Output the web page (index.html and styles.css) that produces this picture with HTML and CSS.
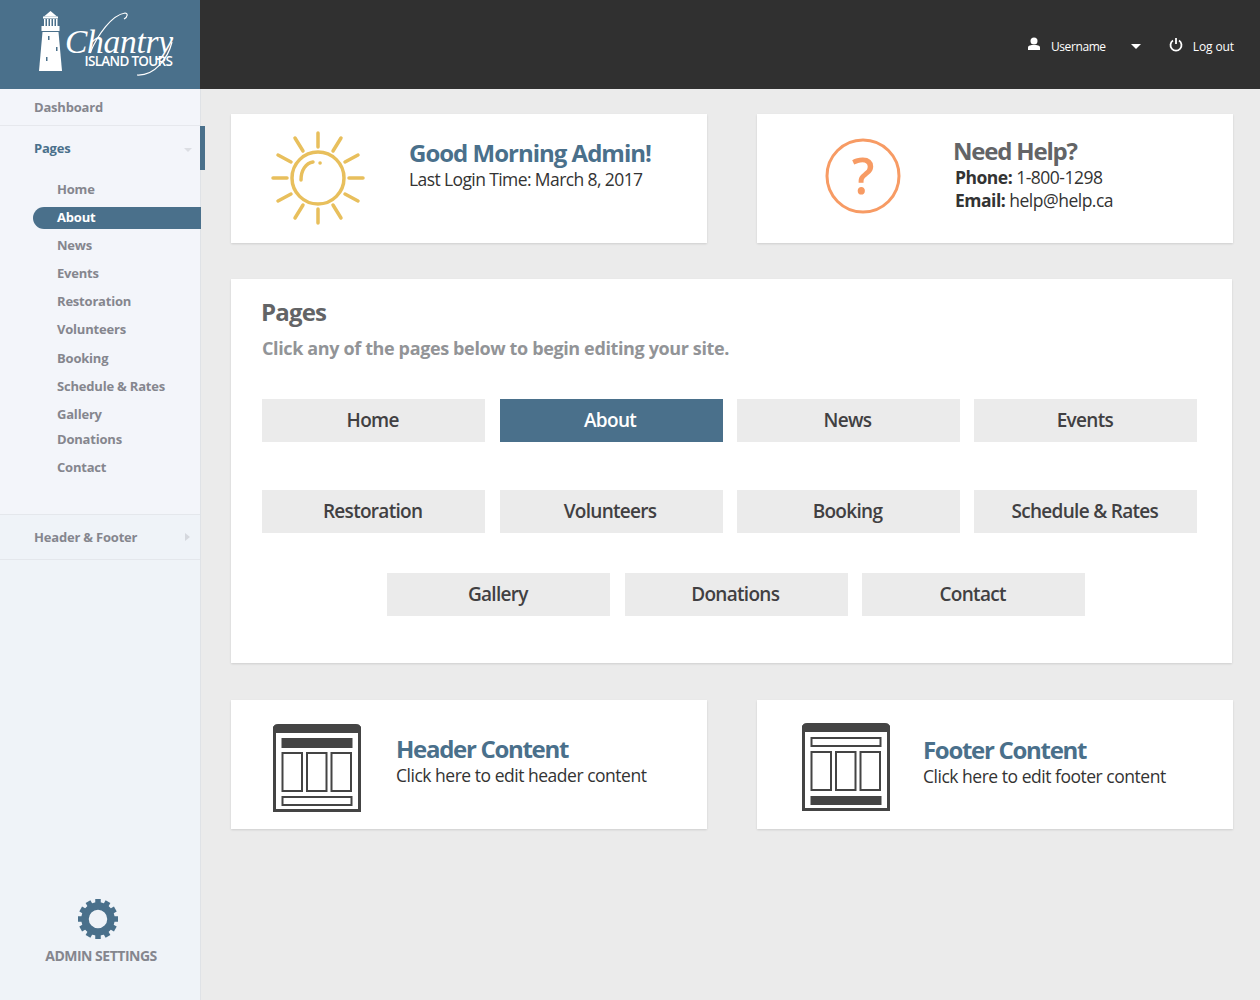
FILE: index.html
```html
<!doctype html>
<html>
    <head>
        <meta charset="utf-8">
        <title>Chantry Island Tours</title>
        <link rel="stylesheet" href="styles.css">
    </head>
    <body>
        <aside class="sidebar">
            <div class="logo">
                <svg width="200" height="89" viewBox="0 0 200 89">
                    <g fill="#fff">
                        <path d="M50.5 11 L57 16.5 H44 Z"/>
                        <rect x="43" y="16.5" width="15" height="2"/>
                        <path d="M44 19h1.5v7H44zM47 19h1.5v7H47zM50 19h1.5v7H50zM53 19h1.5v7H53zM56 19h1.5v7H56z"/>
                        <rect x="41.500" y="26" width="18" height="5"/>
                        <path d="M42.500 32 H58.500 L62 71 H39 Z"/>
                    </g>
                    <g fill="#4a708b">
                        <rect x="48" y="36" width="1.500" height="4"/>
                        <rect x="56" y="47" width="1.500" height="4"/>
                        <rect x="46" y="57" width="1.500" height="4"/>
                    </g>
                    <text class="logo-script" x="65" y="53">Chantry</text>
                    <path class="logo-flourish" d="M90 53 C98 34 112 15 125 13 C128 13 128 17 124 19"/>
                    <path class="logo-flourish" d="M172 42 C168 58 155 76 137 75"/>
                    <text class="logo-sub" x="84.500" y="66">ISLAND TOURS</text>
                </svg>
            </div>
            <nav class="nav">
                <a class="nav-top nav-dash">Dashboard</a>
                <a class="nav-top nav-pages">Pages<span class="caret-down"></span></a>
                <span class="nav-marker"></span>
                <ul class="subnav">
                    <li>Home</li>
                    <li class="active">About</li>
                    <li>News</li>
                    <li>Events</li>
                    <li>Restoration</li>
                    <li>Volunteers</li>
                    <li>Booking</li>
                    <li>Schedule &amp; Rates</li>
                    <li class="tight">Gallery</li>
                    <li>Donations</li>
                    <li>Contact</li>
                </ul>
                <a class="nav-top nav-hf">Header &amp; Footer<span class="caret-right"></span></a>
            </nav>
            <div class="admin">
                <svg class="gear" width="40" height="40" viewBox="0 0 40 40">
                    <circle cx="20" cy="20" r="13" fill="none" stroke="#4a708b" stroke-width="7.500"/>
                    <g fill="#4a708b">
                        <rect x="17.250" y="0" width="5.500" height="6"/>
                        <rect x="17.250" y="0" width="5.500" height="6" transform="rotate(30 20 20)"/>
                        <rect x="17.250" y="0" width="5.500" height="6" transform="rotate(60 20 20)"/>
                        <rect x="17.250" y="0" width="5.500" height="6" transform="rotate(90 20 20)"/>
                        <rect x="17.250" y="0" width="5.500" height="6" transform="rotate(120 20 20)"/>
                        <rect x="17.250" y="0" width="5.500" height="6" transform="rotate(150 20 20)"/>
                        <rect x="17.250" y="0" width="5.500" height="6" transform="rotate(180 20 20)"/>
                        <rect x="17.250" y="0" width="5.500" height="6" transform="rotate(210 20 20)"/>
                        <rect x="17.250" y="0" width="5.500" height="6" transform="rotate(240 20 20)"/>
                        <rect x="17.250" y="0" width="5.500" height="6" transform="rotate(270 20 20)"/>
                        <rect x="17.250" y="0" width="5.500" height="6" transform="rotate(300 20 20)"/>
                        <rect x="17.250" y="0" width="5.500" height="6" transform="rotate(330 20 20)"/>
                    </g>
                </svg>
                <div class="admin-label">ADMIN SETTINGS</div>
            </div>
        </aside>

        <div class="content">
            <header class="topbar">
                <svg class="top-icon" width="14" height="14" viewBox="0 0 14 14">
                    <circle cx="7" cy="4" r="3.500" fill="#fff"/>
                    <path d="M1 13 V10.500 C1 8.500 4 8 7 8 C10 8 13 8.500 13 10.500 V13 Z" fill="#fff"/>
                </svg>
                <span class="user">Username</span>
                <span class="caret-white"></span>
                <svg class="top-icon power" width="14" height="15" viewBox="0 0 14 15">
                    <path d="M4 3.500 A5.500 5.500 0 1 0 10 3.500" fill="none" stroke="#fff" stroke-width="1.800"/>
                    <path d="M7 1 V7" stroke="#fff" stroke-width="1.800"/>
                </svg>
                <span class="logout">Log out</span>
            </header>

            <main class="main">
                <div class="row">
                    <section class="card card-small">
                        <svg class="sun" width="100" height="100" viewBox="0 0 100 100">
                            <g stroke="#e8bf5c" stroke-width="3.500" stroke-linecap="round" fill="none">
                                <circle cx="50" cy="50" r="26"/>
                                <path d="M33 52 C33 42 38 35 45 34"/>
                                <path d="M52 35 h0.100"/>
                                <path d="M50 5 V19 M50 81 V95 M5 50 H19 M81 50 H95"/>
                                <path d="M27 10 L35 23 M65 77 L73 90 M10 27 L23 34 M77 66 L90 73"/>
                                <path d="M73 10 L65 23 M35 77 L27 90 M90 27 L77 34 M23 66 L10 73"/>
                            </g>
                        </svg>
                        <div class="greet">
                            <h2 class="title blue">Good Morning Admin!</h2>
                            <p class="line">Last Login Time: March 8, 2017</p>
                        </div>
                    </section>
                    <section class="card card-small">
                        <svg class="help-icon" width="76" height="76" viewBox="0 0 76 76">
                            <circle cx="38" cy="38" r="36" fill="none" stroke="#f79b64" stroke-width="3"/>
                            <text class="help-mark" x="38" y="56">?</text>
                        </svg>
                        <div class="help">
                            <h2 class="title grey">Need Help?</h2>
                            <p class="line"><b>Phone:</b> 1-800-1298</p>
                            <p class="line"><b>Email:</b> help@help.ca</p>
                        </div>
                    </section>
                </div>

                <section class="card pages">
                    <h2 class="pages-title">Pages</h2>
                    <p class="pages-sub">Click any of the pages below to begin editing your site.</p>
                    <div class="btn-row first">
                        <a class="btn">Home</a>
                        <a class="btn on">About</a>
                        <a class="btn">News</a>
                        <a class="btn">Events</a>
                    </div>
                    <div class="btn-row second">
                        <a class="btn">Restoration</a>
                        <a class="btn">Volunteers</a>
                        <a class="btn">Booking</a>
                        <a class="btn">Schedule &amp; Rates</a>
                    </div>
                    <div class="btn-row third">
                        <a class="btn">Gallery</a>
                        <a class="btn">Donations</a>
                        <a class="btn">Contact</a>
                    </div>
                </section>

                <div class="row">
                    <section class="card card-small">
                        <svg class="layout-icon" width="88" height="88" viewBox="0 0 88 88">
                            <path d="M0 9 V5 Q0 0 5 0 H83 Q88 0 88 5 V9 Z" fill="#444"/>
                            <rect x="1.500" y="4" width="85" height="82.500" fill="none" stroke="#444" stroke-width="3"/>
                            <rect x="8.500" y="14" width="71" height="10" fill="#444"/>
                            <g fill="none" stroke="#444" stroke-width="2">
                                <rect x="9.500" y="29" width="19.500" height="38"/>
                                <rect x="34" y="29" width="19.500" height="38"/>
                                <rect x="58.500" y="29" width="19.500" height="38"/>
                                <rect x="9.500" y="73" width="69" height="8"/>
                            </g>
                        </svg>
                        <div class="edit-head">
                            <h2 class="title blue">Header Content</h2>
                            <p class="line">Click here to edit header content</p>
                        </div>
                    </section>
                    <section class="card card-small">
                        <svg class="layout-icon foot" width="88" height="88" viewBox="0 0 88 88">
                            <path d="M0 9 V5 Q0 0 5 0 H83 Q88 0 88 5 V9 Z" fill="#444"/>
                            <rect x="1.500" y="4" width="85" height="82.500" fill="none" stroke="#444" stroke-width="3"/>
                            <rect x="8.500" y="73" width="71" height="9" fill="#444"/>
                            <g fill="none" stroke="#444" stroke-width="2">
                                <rect x="9.500" y="15" width="69" height="8"/>
                                <rect x="9.500" y="29" width="19.500" height="38"/>
                                <rect x="34" y="29" width="19.500" height="38"/>
                                <rect x="58.500" y="29" width="19.500" height="38"/>
                            </g>
                        </svg>
                        <div class="edit-foot">
                            <h2 class="title blue">Footer Content</h2>
                            <p class="line">Click here to edit footer content</p>
                        </div>
                    </section>
                </div>
            </main>
        </div>
    </body>
</html>
```

FILE: styles.css
```css
*{
    margin: 0px;
    padding: 0px;
    box-sizing: border-box;
}
html,body{
    height: 100%;
}
body{
    display: flex;
    width: 1260px;
    height: 1000px;
    overflow: hidden;
    background-color: #ebebeb;
    font-family: "Open Sans", "Liberation Sans", sans-serif;
    color: #333;
}
svg{
    display: block;
    flex: none;
}

/* sidebar */
.sidebar{
    width: 201px;
    flex: none;
    display: flex;
    flex-direction: column;
    background-color: #eff3f8;
    border-right: 1px solid #dfe2e6;
}
.logo{
    height: 89px;
    width: 200px;
    background-color: #4a708b;
}
.logo-script{
    font-family: "Liberation Serif", serif;
    font-style: italic;
    font-size: 33.5px;
    letter-spacing: -0.3px;
    fill: #fff;
}
.logo-sub{
    font-size: 13.5px;
    font-weight: 600;
    letter-spacing: -0.7px;
    fill: #fff;
}
.logo-flourish{
    fill: none;
    stroke: #fff;
    stroke-width: 1.2;
}
.nav{
    position: relative;
    display: flex;
    flex-direction: column;
    flex: none;
    background-color: #f3f5fa;
    height: 471px;
}
.nav-top{
    display: flex;
    flex: none;
    align-items: center;
    justify-content: space-between;
    padding-left: 34px;
    padding-right: 8px;
    font-size: 13px;
    font-weight: 700;
    letter-spacing: -0.2px;
    color: #85868e;
}
.nav-dash{
    height: 37px;
    border-bottom: 1px solid #e6e8ed;
}
.nav-pages{
    height: 44px;
    color: #4a708b;
}
.nav-hf{
    height: 46px;
    border-top: 1px solid #e4e7ec;
    border-bottom: 1px solid #e4e7ec;
    background-color: #eff3f8;
}
.caret-down{
    width: 0;
    height: 0;
    border-left: 4px solid transparent;
    border-right: 4px solid transparent;
    border-top: 4px solid #dcdee3;
    margin-top: 4px;
}
.caret-right{
    width: 0;
    height: 0;
    border-top: 4px solid transparent;
    border-bottom: 4px solid transparent;
    border-left: 5px solid #d5d8de;
    margin-right: 2px;
}
.nav-marker{
    position: absolute;
    left: 200px;
    top: 37px;
    width: 5px;
    height: 44px;
    background-color: #4a708b;
}
.subnav{
    list-style: none;
    flex: 1;
    padding-top: 5px;
}
.subnav li{
    height: 28.1px;
    line-height: 28px;
    margin-left: 33px;
    padding-left: 24px;
    font-size: 13px;
    font-weight: 700;
    letter-spacing: -0.2px;
    color: #85868e;
}
.subnav li.tight{
    height: 25px;
}
.subnav li.active{
    position: relative;
    color: #fff;
    z-index: 0;
}
.subnav li.active::before{
    content: "";
    position: absolute;
    z-index: -1;
    left: 0;
    width: 168px;
    top: 4px;
    height: 22px;
    border-radius: 11px 0 0 11px;
    background-color: #4a708b;
}
.admin{
    margin-top: auto;
    height: 101px;
    display: flex;
    flex-direction: column;
    align-items: center;
}
.gear{
    margin-right: 4px;
}
.admin-label{
    margin-top: 7px;
    margin-left: 2px;
    font-size: 14px;
    font-weight: 700;
    letter-spacing: -0.5px;
    color: #85868e;
}

/* top bar */
.content{
    flex: 1;
    display: flex;
    flex-direction: column;
}
.topbar{
    height: 89px;
    flex: none;
    display: flex;
    align-items: center;
    margin-left: -1px;
    padding-top: 3px;
    padding-right: 26px;
    justify-content: flex-end;
    background-color: #303030;
    color: #fff;
    font-size: 12px;
    letter-spacing: -0.4px;
}
.top-icon{
    margin-top: -4px;
}
.user{
    margin-left: 10px;
}
.caret-white{
    width: 0;
    height: 0;
    margin-left: 25px;
    margin-right: 28px;
    border-left: 5.5px solid transparent;
    border-right: 5.5px solid transparent;
    border-top: 5px solid #fff;
}
.logout{
    margin-left: 10px;
    letter-spacing: -0.1px;
}

/* main area */
.main{
    padding: 25px 27px 0 30px;
}
.row{
    display: flex;
    justify-content: space-between;
}
.card{
    background-color: #fff;
    box-shadow: 0 1px 2px rgba(0,0,0,0.12);
}
.card-small{
    width: 476px;
    height: 129px;
    display: flex;
    position: relative;
}
.sun{
    margin: 14px 0 0 37px;
}
.greet{
    margin: 23px 0 0 41px;
}
.greet .title{
    margin-bottom: -1px;
}
.help-icon{
    margin: 24px 0 0 68px;
}
.help{
    margin: 22px 0 0 52px;
}
.help .title{
    line-height: 30px;
    letter-spacing: -1.2px;
}
.title{
    font-size: 24px;
    font-weight: 700;
    line-height: 32px;
    letter-spacing: -1px;
}
.blue{
    color: #4a708b;
}
.grey{
    color: #636466;
}
.line{
    font-size: 17.5px;
    line-height: 23px;
    letter-spacing: -0.6px;
    color: #333;
}
.line b{
    font-weight: 700;
}
.help .line{
    margin-left: 2px;
    letter-spacing: -0.5px;
}
.help-mark{
    font-family: "Open Sans", sans-serif;
    font-size: 50px;
    font-weight: 600;
    text-anchor: middle;
    fill: #f79b64;
}
.layout-icon{
    margin: 24px 0 0 42px;
}
.layout-icon.foot{
    margin: 23px 0 0 45px;
}
.edit-head{
    margin: 33px 0 0 35px;
}
.edit-head .title,
.edit-foot .title{
    margin-bottom: -1px;
    letter-spacing: -1.3px;
}
.edit-head .line,
.edit-foot .line{
    letter-spacing: -0.48px;
}
.edit-foot{
    margin: 34px 0 0 33px;
}

/* pages panel */
.pages{
    width: 1001px;
    height: 384px;
    margin: 36px 0 37px;
    padding: 17px 34.5px 0 31px;
}
.pages-title{
    margin-left: -1px;
    font-size: 24px;
    font-weight: 700;
    line-height: 32px;
    letter-spacing: -0.8px;
    color: #636466;
}
.pages-sub{
    margin-top: 7px;
    font-size: 18px;
    font-weight: 700;
    line-height: 26px;
    letter-spacing: -0.37px;
    color: #929497;
}
.btn-row{
    display: flex;
    justify-content: center;
    gap: 14.4px;
}
.btn-row.first{
    margin-top: 38px;
}
.btn-row.second{
    margin-top: 48px;
}
.btn-row.third{
    margin-top: 40px;
    padding-left: 13px;
}
.btn{
    width: 223px;
    height: 43px;
    line-height: 43px;
    text-align: center;
    padding-right: 2px;
    font-size: 19px;
    font-weight: 600;
    letter-spacing: -0.7px;
    background-color: #ebebeb;
    color: #414042;
}
.btn.on{
    background-color: #4a708b;
    color: #fff;
}
```
